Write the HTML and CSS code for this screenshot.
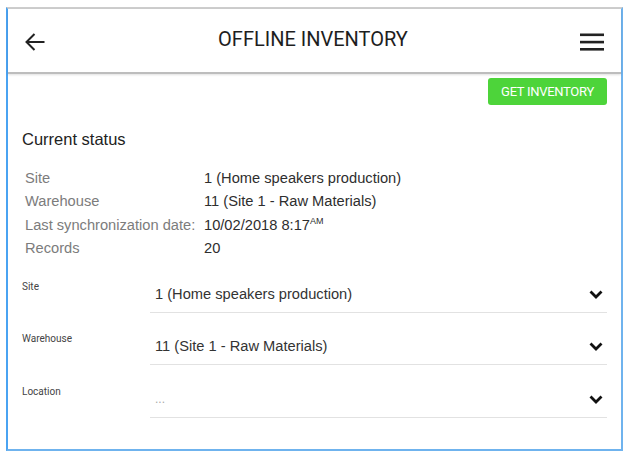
FILE: index.html
```html
<!DOCTYPE html>
<html>
<head>
<meta charset="utf-8">
<link rel="stylesheet" href="styles.css">
</head>
<body>
<div class="frame">
  <header class="topbar">
    <svg class="back" width="22" height="20" viewBox="0 0 22 20"><path d="M20.5 10H2.5M10.5 2L2.5 10l8 8" fill="none" stroke="#222" stroke-width="2"/></svg>
    <div class="title">OFFLINE INVENTORY</div>
    <svg class="menu" width="24" height="18" viewBox="0 0 24 18"><rect x="0" y="0.5" width="24" height="2.6" fill="#222"/><rect x="0" y="7.8" width="24" height="2.6" fill="#222"/><rect x="0" y="15" width="24" height="2.6" fill="#222"/></svg>
  </header>
  <main class="content">
    <div class="actions"><button class="btn">GET INVENTORY</button></div>
    <h2 class="heading">Current status</h2>
    <div class="status">
      <div class="k">Site</div><div class="v">1 (Home speakers production)</div>
      <div class="k">Warehouse</div><div class="v">11 (Site 1 - Raw Materials)</div>
      <div class="k">Last synchronization date:</div><div class="v">10/02/2018 8:17<sup class="ampm">AM</sup></div>
      <div class="k">Records</div><div class="v">20</div>
    </div>
    <div class="form">
      <div class="row">
        <div class="label">Site</div>
        <div class="field"><span class="val">1 (Home speakers production)</span><svg class="chev" width="14" height="9" viewBox="0 0 14 9"><path d="M1.5 1.5L7 7l5.5-5.5" fill="none" stroke="#111" stroke-width="2.8"/></svg></div>
      </div>
      <div class="row">
        <div class="label">Warehouse</div>
        <div class="field"><span class="val">11 (Site 1 - Raw Materials)</span><svg class="chev" width="14" height="9" viewBox="0 0 14 9"><path d="M1.5 1.5L7 7l5.5-5.5" fill="none" stroke="#111" stroke-width="2.8"/></svg></div>
      </div>
      <div class="row">
        <div class="label">Location</div>
        <div class="field"><span class="val placeholder">...</span><svg class="chev" width="14" height="9" viewBox="0 0 14 9"><path d="M1.5 1.5L7 7l5.5-5.5" fill="none" stroke="#111" stroke-width="2.8"/></svg></div>
      </div>
    </div>
  </main>
</div>
</body>
</html>
```
FILE: styles.css
```css
html, body {
  margin: 0;
  padding: 0;
  background: #fff;
}
body {
  font-family: "Liberation Sans", Arial, sans-serif;
}
.frame {
  margin: 7px 0 0 6px;
  width: 617px;
  height: 444px;
  box-sizing: border-box;
  border-top: 2px solid #cdcdcd;
  border-left: 2px solid #4aa3f2;
  border-right: 2px solid #6fb3ee;
  border-bottom: 2px solid #6fb3ee;
  display: flex;
  flex-direction: column;
}
.topbar {
  height: 63px;
  border-bottom: 2px solid #bdbdbd;
  box-shadow: 0 1px 2px rgba(0,0,0,0.12);
  display: flex;
  align-items: center;
  justify-content: space-between;
  padding: 0 17px 0 16px;
}
.back { margin-top: 2px; }
.menu { margin-top: 2px; }
.title {
  font-family: Roboto, "Liberation Sans", sans-serif;
  font-size: 20px;
  color: #1e1e1e;
  margin-top: -3px;
}
.content {
  padding: 0 14px;
  flex: 1;
}
.actions {
  display: flex;
  justify-content: flex-end;
  margin-top: 4px;
}
.btn {
  height: 27px;
  width: 119px;
  border: none;
  border-radius: 3px;
  background: #4dd43a;
  color: #fff;
  font-family: Roboto, "Liberation Sans", sans-serif;
  font-size: 13px;
  letter-spacing: -0.3px;
  padding: 0;
}
.heading {
  margin: 24px 0 0 0;
  font-size: 16.5px;
  line-height: 20px;
  font-weight: normal;
  color: #222;
}
.status {
  display: grid;
  grid-template-columns: 179px auto;
  margin: 18px 0 0 3px;
  font-size: 14.67px;
  line-height: 23.3px;
}
.k { color: #7c7c7c; }
.v { color: #2e2e2e; }
.ampm {
  font-size: 9px;
  line-height: 0;
  vertical-align: 6px;
}
.form {
  margin-top: 0;
}
.row {
  display: flex;
  align-items: flex-start;
  margin-top: 11.5px;
}
.label {
  width: 128px;
  padding-top: 9px;
  font-family: Roboto, "Liberation Sans", sans-serif;
  font-size: 10px;
  line-height: 12px;
  color: #444;
}
.field {
  flex: 1;
  display: flex;
  align-items: center;
  justify-content: space-between;
  padding: 12px 4px 8px 5px;
  border-bottom: 1px solid #e2e2e2;
  font-size: 14.67px;
  line-height: 20px;
  color: #333;
}
.placeholder {
  color: #aaa;
  font-size: 12px;
}
.chev { margin-top: 1px; }
```
